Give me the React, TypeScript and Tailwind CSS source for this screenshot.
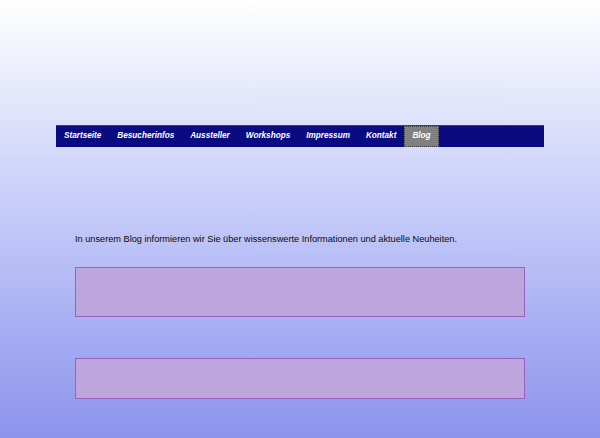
export default function App() {
  const items = ["Startseite", "Besucherinfos", "Aussteller", "Workshops", "Impressum", "Kontakt", "Blog"];

  return (
    <div
      className="min-h-[438px] w-full bg-gradient-to-b from-[#ffffff] to-[#8c93ec]"
      style={{ fontFamily: '"Liberation Sans", Arial, sans-serif' }}
    >
      <div className="mx-auto w-[488px] pt-[125px]">
        <nav className="flex h-[22px] bg-[#0a0b80] border-t border-[#3a3b9a]">
          {items.map((item) => (
            <a
              key={item}
              href="#"
              className={
                item === "Blog"
                  ? "flex items-center px-2 text-[8.2px] font-bold italic text-white bg-[#808080] outline-1 outline-dotted outline-[#3a3a3a] -outline-offset-1"
                  : "flex items-center px-2 text-[8.2px] font-bold italic text-white"
              }
            >
              {item}
            </a>
          ))}
        </nav>

        <div className="px-[19px] pt-[86px]">
          <p className="text-[9.2px] leading-[12px] text-[#0a0a0a]">
            In unserem Blog informieren wir Sie über wissenswerte Informationen und aktuelle Neuheiten.
          </p>
          <div className="mt-[22px] h-[50px] border border-[#9a62bf] bg-[#bea5de]" />
          <div className="mt-[41px] h-[41px] border border-[#9a62bf] bg-[#bea5de]" />
        </div>
      </div>
    </div>
  );
}
